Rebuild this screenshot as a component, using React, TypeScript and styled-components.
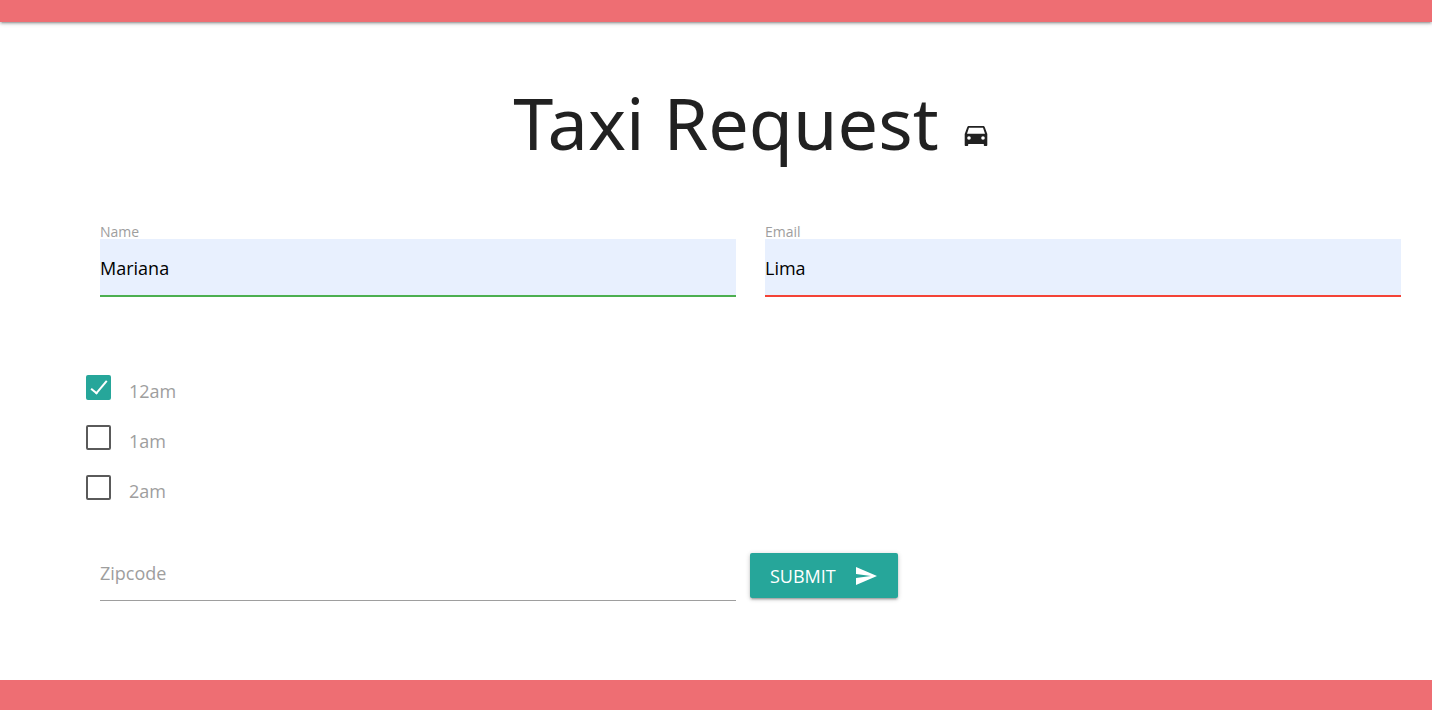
import React from "react";
import styled, { createGlobalStyle } from "styled-components";

const GlobalStyle = createGlobalStyle`
  *, *::before, *::after { box-sizing: border-box; }
  body {
    margin: 0;
    background: #fff;
    color: rgba(0, 0, 0, 0.87);
    font-family: "Segoe UI", "Open Sans", "Noto Sans", sans-serif;
    font-size: 18px;
    line-height: 24px;
  }
`;

const Page = styled.div`
  min-height: 100vh;
  display: flex;
  flex-direction: column;
`;

const TopBar = styled.header`
  height: 22px;
  background: #ee6e73;
  box-shadow: 0 2px 2px 0 rgba(0, 0, 0, 0.14), 0 3px 1px -2px rgba(0, 0, 0, 0.12),
    0 1px 5px 0 rgba(0, 0, 0, 0.2);
`;

const BottomBar = styled.footer`
  height: 30px;
  background: #ee6e73;
`;

const Main = styled.main`
  flex: 1;
  padding: 48px 31px 48px 100px;
`;

const Title = styled.h1`
  display: flex;
  justify-content: center;
  align-items: baseline;
  gap: 25px;
  margin: 0 0 51px;
  font-family: "Segoe UI", "Noto Sans", "Open Sans", sans-serif;
  font-size: 72px;
  font-weight: 400;
  line-height: 104px;
`;

const CarIcon = styled.svg`
  width: 24px;
  height: 24px;
  fill: currentColor;
`;

const Row = styled.div`
  display: grid;
  grid-template-columns: 1fr 1fr;
  column-gap: 29px;
`;

const Field = styled.div`
  display: flex;
  flex-direction: column;
`;

const FieldLabel = styled.label`
  color: #9e9e9e;
  font-size: 14px;
  line-height: 14px;
`;

const TextInput = styled.input<{ $state: string }>`
  width: 100%;
  height: 58px;
  padding: 2px 0 0;
  border: 0;
  border-bottom: 2px solid ${(p) => p.$state};
  border-radius: 0;
  outline: 0;
  background: #e8f0fe;
  color: #000;
  font: inherit;
`;

const ZipInput = styled.input`
  width: 100%;
  height: 56px;
  padding: 0;
  border: 0;
  border-bottom: 1px solid #9e9e9e;
  border-radius: 0;
  outline: 0;
  background: transparent;
  font: inherit;

  &::placeholder {
    color: #9e9e9e;
    opacity: 1;
  }
`;

const Hours = styled.fieldset`
  display: flex;
  flex-direction: column;
  align-items: flex-start;
  gap: 18px;
  margin: 76px 0 40px -14px;
  padding: 0;
  border: 0;
`;

const HourOption = styled.label`
  display: flex;
  align-items: flex-start;
  gap: 18px;
  height: 32px;
  color: #9e9e9e;
  line-height: 36px;
`;

const Tick = styled.input`
  appearance: none;
  display: flex;
  justify-content: center;
  width: 25px;
  height: 25px;
  margin: 2px 0 0;
  border: 2px solid #5a5a5a;
  border-radius: 2px;

  &:checked {
    border-color: #26a69a;
    background: #26a69a;
  }

  &:checked::before {
    content: "";
    width: 8px;
    height: 17px;
    border: solid #fff;
    border-width: 0 2px 2px 0;
    transform: rotate(40deg);
  }
`;

const SubmitButton = styled.button`
  justify-self: start;
  display: flex;
  align-items: center;
  gap: 18px;
  height: 45px;
  margin: 8px 0 0 -15px;
  padding: 0 20px;
  border: 0;
  border-radius: 2px;
  background: #26a69a;
  color: #fff;
  font: inherit;
  text-transform: uppercase;
  box-shadow: 0 2px 2px 0 rgba(0, 0, 0, 0.14), 0 3px 1px -2px rgba(0, 0, 0, 0.12),
    0 1px 5px 0 rgba(0, 0, 0, 0.2);
`;

const SendIcon = styled.svg`
  width: 24px;
  height: 24px;
  fill: currentColor;
`;

const hours = ["12am", "1am", "2am"];

export default function App() {
  return (
    <Page>
      <GlobalStyle />
      <TopBar />
      <Main>
        <Title>
          <span>Taxi Request</span>
          <CarIcon viewBox="0 0 24 24" aria-hidden="true">
            <path
              fillRule="evenodd"
              d="M5 0h14c.9 0 1.500.5 1.800 1.300L23.300 8v11c0 .6-.4 1-1 1h-1.500c-.6 0-1-.4-1-1v-1H4.200v1c0 .6-.4 1-1 1H1.700c-.6 0-1-.4-1-1V8L3.200 1.300C3.500.5 4.100 0 5 0zM5 1.800L3 7.800h18l-2-6zM5 10.200a1.800 1.800 0 1 0 0 3.600 1.800 1.800 0 0 0 0-3.600zm14 0a1.800 1.800 0 1 0 0 3.600 1.800 1.800 0 0 0 0-3.600z"
            />
          </CarIcon>
        </Title>
        <form onSubmit={(e) => e.preventDefault()}>
          <Row>
            <Field>
              <FieldLabel htmlFor="name">Name</FieldLabel>
              <TextInput id="name" type="text" defaultValue="Mariana" $state="#4caf50" />
            </Field>
            <Field>
              <FieldLabel htmlFor="email">Email</FieldLabel>
              <TextInput id="email" type="email" defaultValue="Lima" $state="#f44336" />
            </Field>
          </Row>
          <Hours aria-label="Pickup time">
            {hours.map((hour, i) => (
              <HourOption key={hour}>
                <Tick type="checkbox" defaultChecked={i === 0} />
                {hour}
              </HourOption>
            ))}
          </Hours>
          <Row>
            <ZipInput type="text" placeholder="Zipcode" aria-label="Zipcode" />
            <SubmitButton type="submit">
              Submit
              <SendIcon viewBox="0 0 24 24" aria-hidden="true">
                <path d="M2 21l21-9L2 3v7l15 2-15 2z" />
              </SendIcon>
            </SubmitButton>
          </Row>
        </form>
      </Main>
      <BottomBar />
    </Page>
  );
}
